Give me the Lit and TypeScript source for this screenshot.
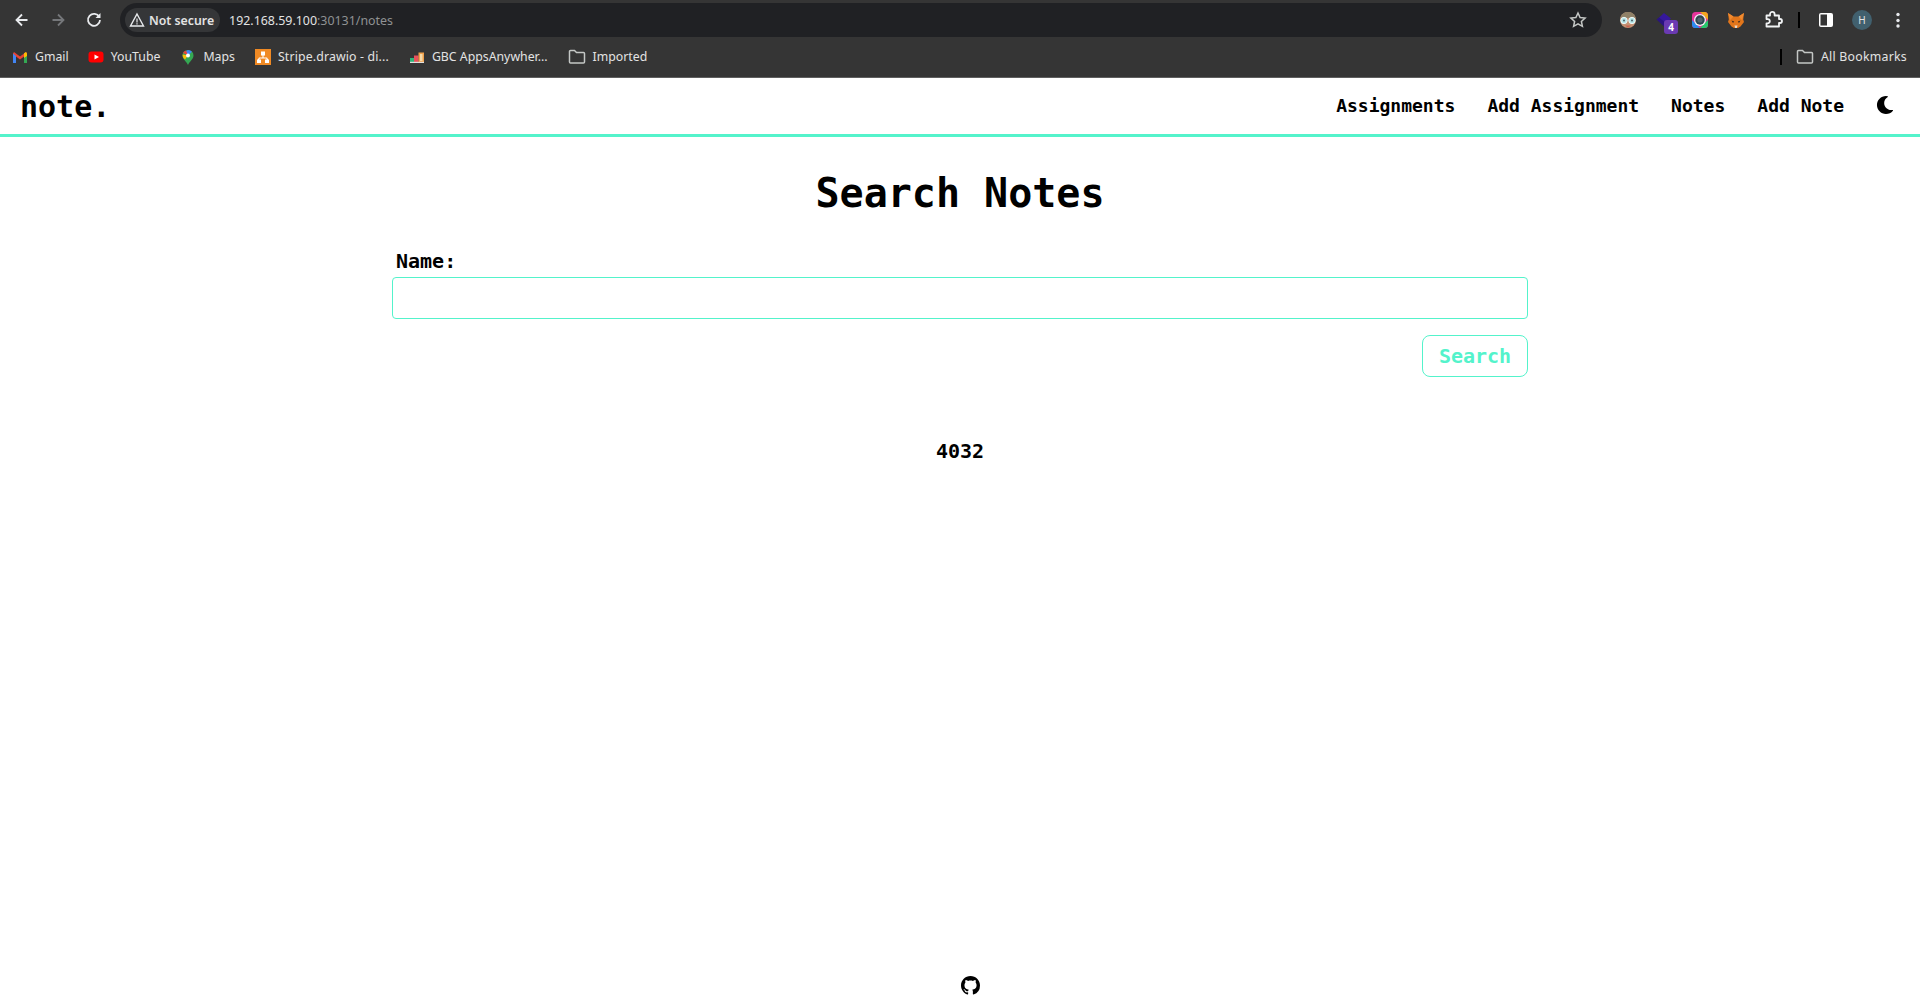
import { LitElement, html, css, svg } from "lit";
import { customElement } from "lit/decorators.js";

const githubPath =
  "M8 0C3.58 0 0 3.58 0 8c0 3.54 2.29 6.53 5.47 7.59.4.07.55-.17.55-.38 0-.19-.01-.82-.01-1.49-2.01.37-2.53-.49-2.69-.94-.09-.23-.48-.94-.82-1.13-.28-.15-.68-.52-.01-.53.63-.01 1.08.58 1.23.82.72 1.21 1.87.87 2.33.66.07-.52.28-.87.51-1.07-1.78-.2-3.64-.89-3.64-3.95 0-.87.31-1.59.82-2.15-.08-.2-.36-1.02.08-2.12 0 0 .67-.21 2.2.82.64-.18 1.32-.27 2-.27.68 0 1.36.09 2 .27 1.53-1.04 2.2-.82 2.2-.82.44 1.1.16 1.92.08 2.12.51.56.82 1.27.82 2.15 0 3.07-1.87 3.75-3.65 3.95.29.25.54.73.54 1.48 0 1.07-.01 1.93-.01 2.2 0 .21.15.46.55.38A8.013 8.013 0 0016 8c0-4.42-3.58-8-8-8z";

const folder = svg`<path d="M1.500 3.500a1 1 0 0 1 1-1h4l2 2h7a1 1 0 0 1 1 1v8.500a1 1 0 0 1-1 1h-13a1 1 0 0 1-1-1z" fill="none" stroke="#c4c7c5" stroke-width="1.500"/>`;

const icons = {
  back: svg`<path d="M15.500 10H5M10 4.500 4.500 10l5.500 5.500" fill="none" stroke="#e8eaed" stroke-width="1.800"/>`,
  forward: svg`<path d="M4.500 10H15M10 4.500l5.500 5.500-5.500 5.500" fill="none" stroke="#75777a" stroke-width="1.800"/>`,
  reload: svg`<path d="M15.300 7A6 6 0 1 0 16 10" fill="none" stroke="#e8eaed" stroke-width="1.800"/><path d="M16.500 3v5h-5z" fill="#e8eaed"/>`,
  warn: svg`<path d="M8 2 14.500 14h-13z" fill="none" stroke="#e8eaed" stroke-width="1.400"/><path d="M7.400 6.500h1.200v4H7.400zM7.400 11.200h1.200v1.200H7.400z" fill="#e8eaed"/>`,
  star: svg`<path d="M10 3l2.100 4.600 5 .5-3.700 3.400 1 4.900L10 13.900l-4.400 2.500 1-4.900-3.700-3.400 5-.5z" fill="none" stroke="#c4c7c5" stroke-width="1.500"/>`,
  gmail: svg`<path d="M1 4.500 2 3l6 4.500L14 3l1 1.500V14h-3V7.500L8 10.500 4 7.500V14H1z" fill="#ea4335"/><path d="M1 4.500V14h3V7z" fill="#4285f4"/><path d="M15 4.500V14h-3V7z" fill="#34a853"/><path d="M12 4.300 14 3l1 1.500V7l-3 2z" fill="#fbbc04"/>`,
  youtube: svg`<rect x="0.500" y="2.500" width="15" height="11" rx="3" fill="#f00"/><path d="M6.500 5.500 11 8l-4.500 2.500z" fill="#fff"/>`,
  maps: svg`<path d="M8 1a5.500 5.500 0 0 0-5.500 5.500C2.500 10 6 12 8 16c2-4 5.500-6 5.500-9.500A5.500 5.500 0 0 0 8 1z" fill="#34a853"/><path d="M3.500 3.500 8 1a5.500 5.500 0 0 1 4 1.700L8 6.500z" fill="#4285f4"/><path d="M2.600 5.500 8 6.500 5 10.500C3.500 9 2.500 8 2.600 5.500z" fill="#fbbc04"/><path d="M3 4a5.500 5.500 0 0 1 3-2.600L8 6.500z" fill="#ea4335"/><circle cx="8" cy="6.500" r="2" fill="#fff"/>`,
  drawio: svg`<rect width="16" height="16" fill="#f08a24"/><path d="M6 2.500h4v4H8.500v2H12l1.200 2H14v3.500h-4v-3.500h1.800l-.6-1H4.800l-.6 1H6v3.500H2v-3.500h.8l1.200-2h3.500v-2H6z" fill="#fff"/>`,
  gbc: svg`<rect x="1" y="9" width="4" height="4.500" fill="#2fb57a"/><rect x="5" y="6.500" width="4.500" height="7" fill="#e8505b"/><rect x="9.500" y="3.500" width="5.500" height="10" fill="#f0a04b"/><rect x="11" y="5" width="2.500" height="7" fill="#f6d9a8"/><rect x="1" y="12.800" width="14" height="1.200" fill="#e0e0e0"/>`,
  avatar: svg`<circle cx="10" cy="10" r="8" fill="#c49274"/><path d="M2.500 8a7.700 7.700 0 0 1 15 0z" fill="#8f8168"/><circle cx="6" cy="10.500" r="3.200" fill="#b5e6e8" stroke="#eef6f6" stroke-width="1"/><circle cx="14" cy="10.500" r="3.200" fill="#b5e6e8" stroke="#eef6f6" stroke-width="1"/><circle cx="6" cy="10.500" r="1" fill="#50616a"/><circle cx="14" cy="10.500" r="1" fill="#50616a"/><path d="M7 15.500h6l-3 2.300z" fill="#c8614f"/>`,
  diamond: svg`<path d="M10 3 17 8.500 10 15 3 9.500z" fill="#35189c"/><path d="M2.500 9.500 5 7.500l7.500 6-2.500 3z" fill="#2a1480"/>`,
  ring: svg`<rect x="2" y="2" width="16" height="16" rx="3.500" fill="#e6349c"/><path d="M10 2h4.500A3.500 3.500 0 0 1 18 5.500V10z" fill="#f2a81d"/><path d="M18 10v4.500a3.500 3.500 0 0 1-3.500 3.500H10z" fill="#25c96b"/><path d="M10 18H5.500A3.500 3.500 0 0 1 2 14.500V10z" fill="#2a8cf0"/><circle cx="10" cy="10" r="6" fill="#eef2f3"/><circle cx="10" cy="10" r="4.700" fill="#2f4550"/><circle cx="10" cy="10" r="2.600" fill="#51656f"/>`,
  fox: svg`<path d="M2 3l5.500 3.500h5L18 3l-.8 6.500.8 2.500-3.500 4.500-2.500 1.500H8l-2.500-1.500L2 12l.8-2.500z" fill="#e2761b"/><path d="M2 3l5.500 3.500L4 10zM18 3l-5.500 3.500L16 10z" fill="#f08a30"/><path d="M5.500 10.500l2.700 1-1.200 1.500zM14.500 10.500l-2.700 1 1.200 1.500z" fill="#3a2a22"/><path d="M8.500 15.500h3l-.7 2.500H9.200z" fill="#e8dccf"/>`,
  puzzle: svg`<path d="M3.500 6.500h3.500V5.200a2.300 2.300 0 0 1 4.600 0v1.300h4.400v3.500h1a2 2 0 0 1 0 4h-1V17.500H3.500V14.300h1.200a2.100 2.100 0 0 0 0-4.200H3.500z" transform="translate(0 -1)" fill="none" stroke="#f1f3f4" stroke-width="1.800" stroke-linejoin="round"/>`,
  panel: svg`<rect x="3" y="3" width="14" height="14" rx="2" fill="#fff"/><rect x="4.500" y="4.500" width="6.500" height="11" fill="#353535"/>`,
  dots: svg`<circle cx="10" cy="4.500" r="1.700" fill="#e8eaed"/><circle cx="10" cy="10.500" r="1.700" fill="#e8eaed"/><circle cx="10" cy="16" r="1.700" fill="#e8eaed"/>`,
};

@customElement("app-root")
export class AppRoot extends LitElement {
  static styles = css`
    :host {
      display: flex;
      flex-direction: column;
      min-height: 100vh;
      background: #fff;
      color: #000;
      font-family: "DejaVu Sans Mono", monospace;
    }
    svg {
      display: block;
      flex: none;
    }

    /* browser frame */
    .chrome {
      background: #353535;
      border-bottom: 1px solid #5f5f5f;
      height: 77px;
      font-family: "Noto Sans", sans-serif;
      color: #e3e3e3;
    }
    .toolbar {
      display: flex;
      align-items: center;
      height: 40px;
    }
    .nav-btns {
      display: flex;
      width: 120px;
      padding-left: 12px;
      gap: 16px;
      box-sizing: border-box;
    }
    .address {
      display: flex;
      align-items: center;
      width: 1482px;
      height: 34px;
      box-sizing: border-box;
      padding: 0 14px 0 5px;
      border-radius: 17px;
      background: #202124;
      font-size: 12.4px;
    }
    .secure {
      display: flex;
      align-items: center;
      gap: 4px;
      height: 24px;
      padding: 0 6px 0 4px;
      margin-right: 9px;
      border-radius: 12px;
      background: #353638;
      font-size: 12.3px;
      font-weight: 600;
      white-space: nowrap;
    }
    .host {
      color: #e3e3e3;
    }
    .path {
      color: #8f9193;
    }
    .address .star {
      margin-left: auto;
    }
    .extensions {
      display: flex;
      align-items: center;
      flex: 1;
      padding-left: 16px;
    }
    .ext {
      position: relative;
      width: 36px;
    }
    .ext.fox {
      width: 37px;
    }
    .ext.puzzle {
      width: 35px;
    }
    .count {
      position: absolute;
      left: 10px;
      top: 10px;
      width: 14px;
      height: 14px;
      border-radius: 3px;
      background: #6a3ab2;
      color: #fff;
      font-size: 10px;
      font-weight: 700;
      line-height: 14px;
      text-align: center;
    }
    .sep {
      width: 2px;
      height: 16px;
      background: #000;
    }
    .extensions .sep {
      margin-right: 16px;
    }
    .profile {
      width: 20px;
      height: 20px;
      border-radius: 50%;
      background: #41606e;
      color: #e3e3e3;
      font-size: 10px;
      line-height: 20px;
      text-align: center;
    }
    .bookmarks {
      display: flex;
      align-items: center;
      height: 33px;
      padding-left: 12px;
      font-size: 12.3px;
      white-space: nowrap;
    }
    .mark {
      display: flex;
      align-items: center;
      gap: 7px;
      margin-right: 20px;
    }
    .mark.gmail {
      margin-right: 19px;
    }
    .mark.stripe {
      letter-spacing: 0.15px;
    }
    .bookmarks .all {
      display: flex;
      align-items: center;
      gap: 7px;
      margin-left: auto;
      margin-right: 13px;
      letter-spacing: 0.25px;
    }
    .bookmarks .sep {
      margin-right: 7px;
    }

    /* app nav */
    nav {
      display: flex;
      align-items: center;
      justify-content: space-between;
      height: 56px;
      padding: 0 26px 0 20px;
      border-bottom: 3px solid #54f3cb;
    }
    .logo {
      font-size: 30px;
      font-weight: 700;
    }
    .links {
      display: flex;
      align-items: center;
      gap: 32px;
      font-size: 18px;
      font-weight: 700;
    }
    .links span {
      margin-top: -2px;
    }
    .links .moon {
      margin-top: -3px;
    }

    /* page */
    main {
      flex: 1;
      display: flex;
      flex-direction: column;
      align-items: center;
    }
    h1 {
      margin: 33px 0 32px;
      font-size: 40px;
      line-height: 47px;
      font-weight: 700;
    }
    form {
      display: flex;
      flex-direction: column;
      width: 1136px;
    }
    label {
      padding-left: 4px;
      margin-bottom: 4px;
      font-size: 20px;
      font-weight: 700;
      line-height: 24px;
    }
    input {
      height: 42px;
      box-sizing: border-box;
      border: 1px solid #54f3cb;
      border-radius: 4px;
      outline: none;
    }
    button {
      align-self: flex-end;
      width: 106px;
      height: 42px;
      margin-top: 16px;
      background: #fff;
      border: 1px solid #54f3cb;
      border-radius: 8px;
      color: #54f3cb;
      font-family: inherit;
      font-size: 20px;
      font-weight: 700;
    }
    .result {
      margin-top: 62px;
      font-size: 20px;
      font-weight: 700;
      line-height: 24px;
    }
    footer {
      display: flex;
      justify-content: center;
      padding: 0 0 10px 21px;
    }
  `;

  private icon(content: unknown, size = 20, box = 20) {
    return html`<svg width=${size} height=${size} viewBox="0 0 ${box} ${box}">${content}</svg>`;
  }

  render() {
    return html`
      <div class="chrome">
        <div class="toolbar">
          <div class="nav-btns">
            ${this.icon(icons.back)} ${this.icon(icons.forward)} ${this.icon(icons.reload)}
          </div>
          <div class="address">
            <span class="secure">${this.icon(icons.warn, 16, 16)} Not secure</span>
            <span class="host">192.168.59.100<span class="path">:30131/notes</span></span>
            <span class="star">${this.icon(icons.star)}</span>
          </div>
          <div class="extensions">
            <span class="ext">${this.icon(icons.avatar)}</span>
            <span class="ext">${this.icon(icons.diamond)}<span class="count">4</span></span>
            <span class="ext">${this.icon(icons.ring)}</span>
            <span class="ext fox">${this.icon(icons.fox)}</span>
            <span class="ext puzzle">${this.icon(icons.puzzle)}</span>
            <span class="sep"></span>
            <span class="ext">${this.icon(icons.panel)}</span>
            <span class="ext"><div class="profile">H</div></span>
            ${this.icon(icons.dots)}
          </div>
        </div>
        <div class="bookmarks">
          <span class="mark gmail">${this.icon(icons.gmail, 16, 16)}Gmail</span>
          <span class="mark">${this.icon(icons.youtube, 16, 16)}YouTube</span>
          <span class="mark">${this.icon(icons.maps, 16, 16)}Maps</span>
          <span class="mark stripe">${this.icon(icons.drawio, 16, 16)}Stripe.drawio - di...</span>
          <span class="mark">${this.icon(icons.gbc, 16, 16)}GBC AppsAnywher...</span>
          <span class="mark">${this.icon(folder, 18, 18)}Imported</span>
          <span class="all"><span class="sep"></span>${this.icon(folder, 18, 18)}All Bookmarks</span>
        </div>
      </div>
      <nav>
        <div class="logo">note.</div>
        <div class="links">
          <span>Assignments</span>
          <span>Add Assignment</span>
          <span>Notes</span>
          <span>Add Note</span>
          <svg class="moon" width="18" height="18" viewBox="0 0 512 512">
            <path d="M283.200 512c79 0 151.100-35.900 198.900-94.800 7.100-8.700-.6-21.400-11.600-19.300-124.200 23.700-238.300-71.600-238.300-197 0-72.200 38.700-138.600 101.500-174.400 9.700-5.500 7.300-20.200-3.800-22.200A258.200 258.200 0 0 0 283.200 0c-141.300 0-256 114.500-256 256 0 141.300 114.500 256 256 256z"/>
          </svg>
        </div>
      </nav>
      <main>
        <h1>Search Notes</h1>
        <form>
          <label for="name">Name:</label>
          <input id="name" type="text" />
          <button type="button">Search</button>
        </form>
        <div class="result">4032</div>
      </main>
      <footer>
        <svg width="19" height="19" viewBox="0 0 16 16"><path d=${githubPath}></path></svg>
      </footer>
    `;
  }
}
